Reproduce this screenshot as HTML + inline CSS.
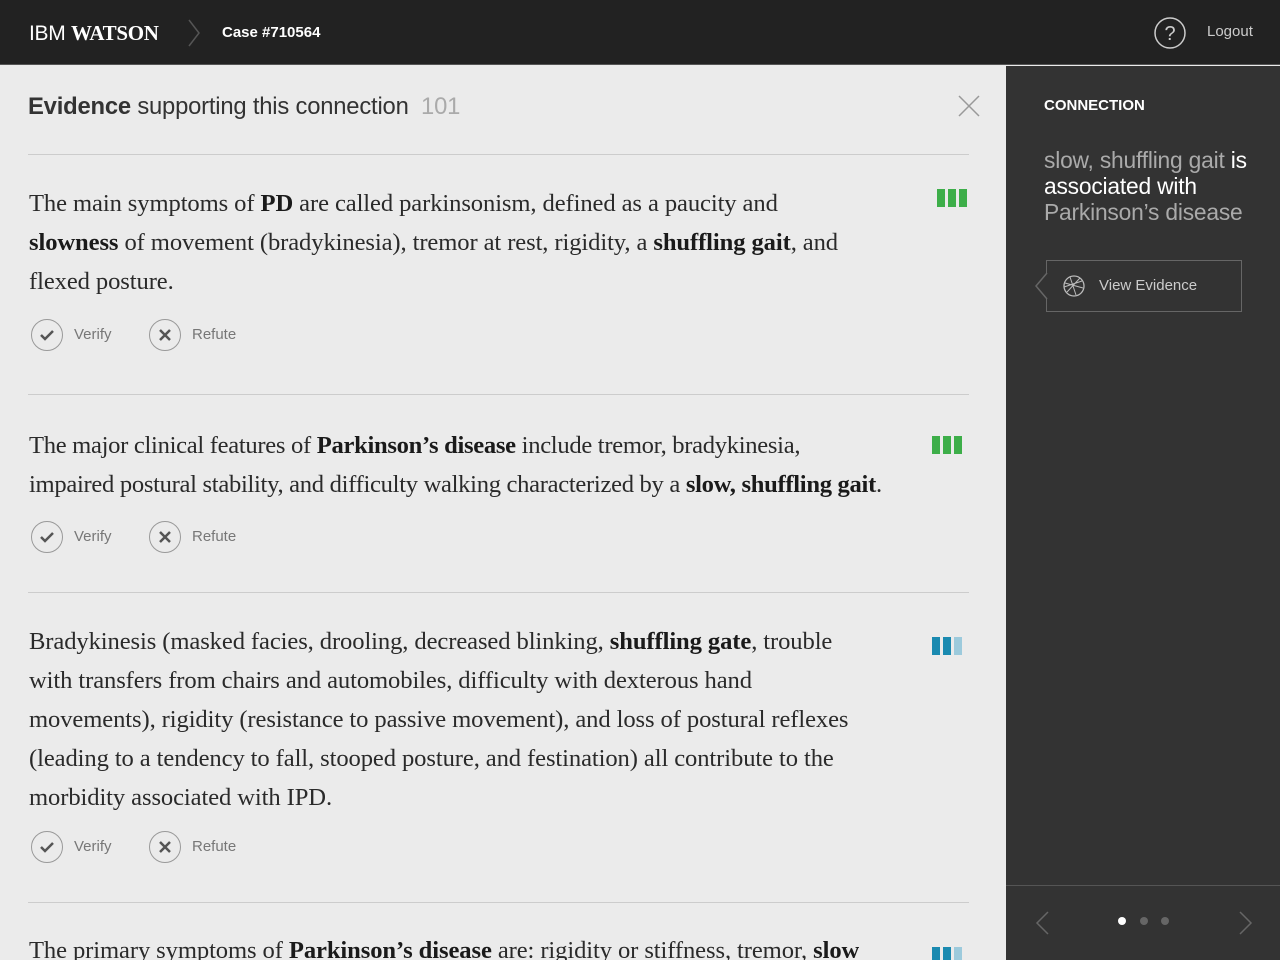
<!DOCTYPE html>
<html style="overflow:hidden;width:1280px;height:960px"><head><meta charset="utf-8"><style>
*{margin:0;padding:0;box-sizing:border-box}
body{width:1280px;height:960px;overflow:hidden;background:#ebebeb;font-family:"Liberation Sans",sans-serif;position:relative}
.top{position:absolute;left:0;top:0;width:1280px;height:65px;background:#222;border-bottom:1px solid #555}
.abs{position:absolute}
.left{position:absolute;left:0;top:66px;width:1006px;height:894px;background:#ebebeb}
.right{position:absolute;left:1006px;top:66px;width:274px;height:894px;background:#333;overflow:hidden}
.hr{position:absolute;left:28px;width:941px;height:1px;background:#ccc}
.p{position:absolute;left:29px;font-family:"Liberation Serif",serif;font-size:24.6px;line-height:39px;color:#2a2a2a;white-space:nowrap;letter-spacing:-0.1px}
.p b{color:#1a1a1a}
.act{position:absolute;left:31px;font-size:15px;color:#777}
.act .c{position:absolute;top:0;width:32px;height:32px;border:1.5px solid #999;border-radius:50%}
.bars{position:absolute;display:flex;gap:3px;overflow:hidden}
.bars i{display:block;width:8px;height:18px}
</style></head><body>
<div class="top">
 <div class="abs" style="left:29px;top:21px;color:#fff;font-size:21px;letter-spacing:-0.3px">IBM <b style="font-family:'Liberation Serif',serif;font-size:21px">WATSON</b></div>
 <svg class="abs" style="left:186px;top:18px" width="16" height="30"><path d="M3 2 L13 15 L3 28" stroke="#555" stroke-width="1.5" fill="none"/></svg>
 <div class="abs" style="left:222px;top:24px;color:#fff;font-size:15px;font-weight:bold">Case #710564</div>
 <svg class="abs" style="left:1153px;top:16px" width="34" height="34"><circle cx="17" cy="17" r="15" stroke="#ccc" stroke-width="1.5" fill="none"/><text x="17" y="24" text-anchor="middle" fill="#ccc" font-size="20" font-family="Liberation Sans">?</text></svg>
 <div class="abs" style="left:1207px;top:23px;color:#ccc;font-size:15px">Logout</div>
</div>
<div class="left">
 <div class="abs" style="left:28px;top:27px;font-size:23.8px;color:#333;letter-spacing:-0.2px"><b>Evidence</b> supporting this connection <span style="color:#aaa;margin-left:6px">101</span></div>
 <svg class="abs" style="left:957px;top:28px" width="24" height="24"><path d="M2 2L22 22M22 2L2 22" stroke="#999" stroke-width="1.5"/></svg>
 <div class="hr" style="top:88px"></div>
</div>
<div class="p" style="top:184px">The main symptoms of <b>PD</b> are called parkinsonism, defined as a paucity and<br><b>slowness</b> of movement (bradykinesia), tremor at rest, rigidity, a <b>shuffling gait</b>, and<br>flexed posture.</div>
<div class="bars" style="left:937px;top:189px"><i style="background:#3dae49"></i><i style="background:#3dae49"></i><i style="background:#3dae49"></i></div>
<div class="act" style="top:319px"><span class="c" style="left:0"></span><svg class="abs" style="left:8px;top:9px" width="16" height="14"><path d="M2 7L6 11L14 3" stroke="#555" stroke-width="2.5" fill="none"/></svg><span class="abs" style="left:43px;top:7px">Verify</span><span class="c" style="left:118px"></span><svg class="abs" style="left:127px;top:9px" width="14" height="14"><path d="M2 2L12 12M12 2L2 12" stroke="#555" stroke-width="2.5"/></svg><span class="abs" style="left:161px;top:7px">Refute</span></div>
<div class="hr" style="top:394px"></div>
<div class="p" style="top:426px;letter-spacing:-0.3px">The major clinical features of <b>Parkinson’s disease</b> include tremor, bradykinesia,<br>impaired postural stability, and difficulty walking characterized by a <b>slow, shuffling gait</b>.</div>
<div class="bars" style="left:932px;top:436px"><i style="background:#3dae49"></i><i style="background:#3dae49"></i><i style="background:#3dae49"></i></div>
<div class="act" style="top:521px"><span class="c" style="left:0"></span><svg class="abs" style="left:8px;top:9px" width="16" height="14"><path d="M2 7L6 11L14 3" stroke="#555" stroke-width="2.5" fill="none"/></svg><span class="abs" style="left:43px;top:7px">Verify</span><span class="c" style="left:118px"></span><svg class="abs" style="left:127px;top:9px" width="14" height="14"><path d="M2 2L12 12M12 2L2 12" stroke="#555" stroke-width="2.5"/></svg><span class="abs" style="left:161px;top:7px">Refute</span></div>
<div class="hr" style="top:592px"></div>
<div class="p" style="top:622px">Bradykinesis (masked facies, drooling, decreased blinking, <b>shuffling gate</b>, trouble<br>with transfers from chairs and automobiles, difficulty with dexterous hand<br>movements), rigidity (resistance to passive movement), and loss of postural reflexes<br>(leading to a tendency to fall, stooped posture, and festination) all contribute to the<br>morbidity associated with IPD.</div>
<div class="bars" style="left:932px;top:637px"><i style="background:#1a8ab0"></i><i style="background:#1a8ab0"></i><i style="background:#9ccadc"></i></div>
<div class="act" style="top:831px"><span class="c" style="left:0"></span><svg class="abs" style="left:8px;top:9px" width="16" height="14"><path d="M2 7L6 11L14 3" stroke="#555" stroke-width="2.5" fill="none"/></svg><span class="abs" style="left:43px;top:7px">Verify</span><span class="c" style="left:118px"></span><svg class="abs" style="left:127px;top:9px" width="14" height="14"><path d="M2 2L12 12M12 2L2 12" stroke="#555" stroke-width="2.5"/></svg><span class="abs" style="left:161px;top:7px">Refute</span></div>
<div class="hr" style="top:902px"></div>
<div class="p" style="top:931px;height:29px;overflow:hidden">The primary symptoms of <b>Parkinson’s disease</b> are: rigidity or stiffness, tremor, <b>slow</b></div>
<div class="bars" style="left:932px;top:947px;height:13px"><i style="background:#1a8ab0"></i><i style="background:#1a8ab0"></i><i style="background:#9ccadc"></i></div>
<div class="right">
 <div class="abs" style="left:38px;top:31px;color:#fff;font-size:15px;font-weight:bold">CONNECTION</div>
 <div class="abs" style="left:38px;top:81px;color:#fff;font-size:22.8px;line-height:26px;letter-spacing:-0.2px"><span style="color:#aaa">slow, shuffling gait</span> is<br>associated with<br><span style="color:#aaa">Parkinson’s disease</span></div>
 <div class="abs" style="left:40px;top:194px;width:196px;height:52px;border:1.5px solid #666"></div>
 <svg class="abs" style="left:28px;top:206px" width="14" height="28"><path d="M13 1L2 14L13 27" stroke="#666" stroke-width="1.5" fill="#333"/></svg>
 <svg class="abs" style="left:56px;top:208px" width="24" height="24"><circle cx="12" cy="12" r="10" stroke="#bbb" stroke-width="1.3" fill="none"/><path d="M3 9L21 14M5 18L18 4M8 3L14 21M2 13L20 7" stroke="#bbb" stroke-width="1" fill="none"/></svg>
 <div class="abs" style="left:93px;top:211px;color:#ccc;font-size:15px">View Evidence</div>
 <div class="abs" style="left:0;top:819px;width:274px;height:1px;background:#555"></div>
 <svg class="abs" style="left:28px;top:844px" width="16" height="26"><path d="M14 2L3 13L14 24" stroke="#666" stroke-width="1.5" fill="none"/></svg>
 <svg class="abs" style="left:232px;top:844px" width="16" height="26"><path d="M2 2L13 13L2 24" stroke="#666" stroke-width="1.5" fill="none"/></svg>
 <div class="abs" style="left:112px;top:851px;width:8px;height:8px;border-radius:50%;background:#fff"></div>
 <div class="abs" style="left:134px;top:851px;width:8px;height:8px;border-radius:50%;background:#666"></div>
 <div class="abs" style="left:155px;top:851px;width:8px;height:8px;border-radius:50%;background:#666"></div>
</div>
</body></html>
